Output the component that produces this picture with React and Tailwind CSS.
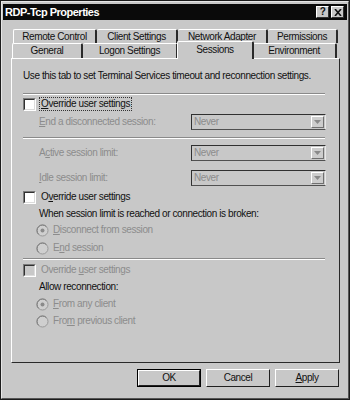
import React from "react";

const GRAY = "text-[#8c8c8c]";

function Sep() {
  return (
    <div className="h-[2px] w-[302px] flex flex-col">
      <div className="h-px bg-[#8a8a8a]" />
      <div className="h-px bg-white" />
    </div>
  );
}

function CheckBox({ disabled }) {
  return (
    <div
      className={
        "w-[13px] h-[13px] border border-t-[#7a7a7a] border-l-[#7a7a7a] border-b-white border-r-white shrink-0 " +
        (disabled ? "bg-[#c8c8c8]" : "bg-white")
      }
    >
      <div className="w-full h-full border border-t-[#303030] border-l-[#303030] border-b-[#dcdcdc] border-r-[#dcdcdc]" />
    </div>
  );
}

function Radio({ checked }) {
  return (
    <svg width="13" height="13" viewBox="0 0 13 13" className="shrink-0">
      <circle cx="6.5" cy="6.5" r="5.5" fill="#cfcfcf" stroke="#9a9a9a" strokeWidth="1" />
      <path d="M2.6 10.4 A5.5 5.5 0 0 1 10.4 2.6" fill="none" stroke="#7a7a7a" strokeWidth="1" />
      {checked && <circle cx="6.5" cy="6.5" r="2" fill="#8a8a8a" />}
    </svg>
  );
}

function Combo() {
  return (
    <div className="w-[135px] h-[16px] flex items-stretch border border-t-[#303030] border-l-[#303030] border-b-[#505050] border-r-[#e8e8e8] bg-[#c8c8c8]">
      <span className={"flex-1 pl-[2px] leading-[14px] " + GRAY}>Never</span>
      <div className="w-[13px] my-[1px] mr-[1px] flex items-center justify-center border border-t-white border-l-white border-b-[#707070] border-r-[#707070] bg-[#cdcdcd]">
        <svg width="7" height="4" viewBox="0 0 7 4">
          <path d="M0 0 H7 L3.5 4 Z" fill="#8a8a8a" />
        </svg>
      </div>
    </div>
  );
}

function Tab({ w, children, first }) {
  return (
    <div
      className={
        "h-full flex items-center justify-center border-t border-t-white border-r-2 border-r-[#2a2a2a] rounded-tl-[2px] rounded-tr-[2px] " +
        (first ? "border-l border-l-white " : "") +
        w
      }
    >
      {children}
    </div>
  );
}

function Button({ children, def }) {
  return (
    <div
      className={
        "w-[64px] h-[18px] flex items-center justify-center " +
        (def ? "border border-black" : "")
      }
    >
      <div className="w-full h-full flex items-center justify-center border border-t-white border-l-white border-b-[#202020] border-r-[#202020] bg-[#c8c8c8]">
        {children}
      </div>
    </div>
  );
}

export default function App() {
  return (
    <div className="w-[350px] h-[400px] bg-[#c8c8c8] border border-[#1c1c1c] font-['Liberation_Sans',Arial,sans-serif] text-[10px] tracking-[-0.4px] text-[#111] leading-[14px] overflow-hidden">
      <div className="w-full h-full border border-t-[#e6e6e6] border-l-[#e6e6e6] border-b-[#555] border-r-[#555] p-[1px] pt-[2px] flex flex-col">
        {/* title bar */}
        <div className="h-[16px] bg-[#0a0a0a] flex items-center pl-[2px] pr-[3px]">
          <span className="text-white font-bold text-[11px] leading-[16px] tracking-[-0.5px]">
            RDP-Tcp Properties
          </span>
          <div className="ml-auto flex gap-[2px]">
            <div className="w-[13px] h-[12px] bg-[#c8c8c8] border border-t-white border-l-white border-b-[#303030] border-r-[#303030] flex items-center justify-center text-[10px] font-bold leading-none">
              ?
            </div>
            <div className="w-[13px] h-[12px] bg-[#c8c8c8] border border-t-white border-l-white border-b-[#303030] border-r-[#303030] flex items-center justify-center">
              <svg width="8" height="7" viewBox="0 0 8 7">
                <path d="M1 0 L7 7 M7 0 L1 7" stroke="#111" strokeWidth="1.6" />
              </svg>
            </div>
          </div>
        </div>

        {/* tabs */}
        <div className="mt-[9px] h-[14px] flex ml-[10px]">
          <Tab w="w-[84px]" first>Remote Control</Tab>
          <Tab w="w-[81px]">Client Settings</Tab>
          <Tab w="w-[90px]">Network Adapter</Tab>
          <Tab w="w-[70px]">Permissions</Tab>
        </div>
        <div className="h-[15px] flex ml-[9px] items-end">
          <Tab w="w-[71px] h-[15px]" first>General</Tab>
          <Tab w="w-[95px] h-[15px]">Logon Settings</Tab>
          <div className="relative z-10 w-[77px] h-[18px] -ml-[1px] -mr-[1px] -mb-[1px] bg-[#c8c8c8] border-t border-t-white border-l border-l-white border-r-2 border-r-[#2a2a2a] rounded-tl-[2px] rounded-tr-[2px] flex justify-center pt-[1px]">
            Sessions
          </div>
          <Tab w="w-[84px] h-[15px]">Environment</Tab>
        </div>

        {/* panel */}
        <div className="ml-[8px] w-[329px] h-[305px] border border-t-white border-l-white border-b-[#2a2a2a] border-r-[#2a2a2a] flex flex-col pl-[11px]">
          <div className="mt-[10px] h-[14px]">
            Use this tab to set Terminal Services timeout and reconnection settings.
          </div>
          <div className="mt-[10px]">
            <Sep />
          </div>
          <div className="mt-[2px] h-[14px] flex items-center">
            <CheckBox />
            <span className="ml-[4px] px-[1px] outline outline-1 outline-dotted outline-[#333] leading-[12px]">
              <u>O</u>verride user settings
            </span>
          </div>
          <div className="mt-[3px] h-[16px] flex items-center pl-[16px]">
            <span className={"w-[152px] " + GRAY}>
              <u>E</u>nd a disconnected session:
            </span>
            <Combo />
          </div>
          <div className="mt-[7px]">
            <Sep />
          </div>
          <div className="mt-[6px] h-[16px] flex items-center pl-[16px]">
            <span className={"w-[152px] " + GRAY}>
              A<u>c</u>tive session limit:
            </span>
            <Combo />
          </div>
          <div className="mt-[9px] h-[16px] flex items-center pl-[16px]">
            <span className={"w-[152px] " + GRAY}>
              <u>I</u>dle session limit:
            </span>
            <Combo />
          </div>
          <div className="mt-[4px] h-[14px] flex items-center">
            <CheckBox />
            <span className="ml-[5px]">
              O<u>v</u>erride user settings
            </span>
          </div>
          <div className="mt-[3px] h-[14px] pl-[16px]">
            When session limit is reached or connection is broken:
          </div>
          <div className="mt-[2px] h-[14px] flex items-center pl-[13px]">
            <Radio checked />
            <span className={"ml-[4px] " + GRAY}>
              <u>D</u>isconnect from session
            </span>
          </div>
          <div className="mt-[4px] h-[14px] flex items-center pl-[13px]">
            <Radio />
            <span className={"ml-[4px] " + GRAY}>
              E<u>n</u>d session
            </span>
          </div>
          <div className="mt-[3px]">
            <Sep />
          </div>
          <div className="mt-[3px] h-[14px] flex items-center">
            <CheckBox disabled />
            <span className={"ml-[5px] " + GRAY}>
              Override <u>u</u>ser settings
            </span>
          </div>
          <div className="mt-[3px] h-[14px] pl-[16px]">Allow reconnection:</div>
          <div className="mt-[3px] h-[14px] flex items-center pl-[13px]">
            <Radio checked />
            <span className={"ml-[4px] " + GRAY}>
              <u>F</u>rom any client
            </span>
          </div>
          <div className="mt-[3px] h-[14px] flex items-center pl-[13px]">
            <Radio />
            <span className={"ml-[4px] " + GRAY}>
              Fro<u>m</u> previous client
            </span>
          </div>
        </div>

        {/* buttons */}
        <div className="mt-[6px] flex justify-end gap-[5px] pr-[8px]">
          <Button def>OK</Button>
          <Button>Cancel</Button>
          <Button>
            <span>
              <u>A</u>pply
            </span>
          </Button>
        </div>
      </div>
    </div>
  );
}
